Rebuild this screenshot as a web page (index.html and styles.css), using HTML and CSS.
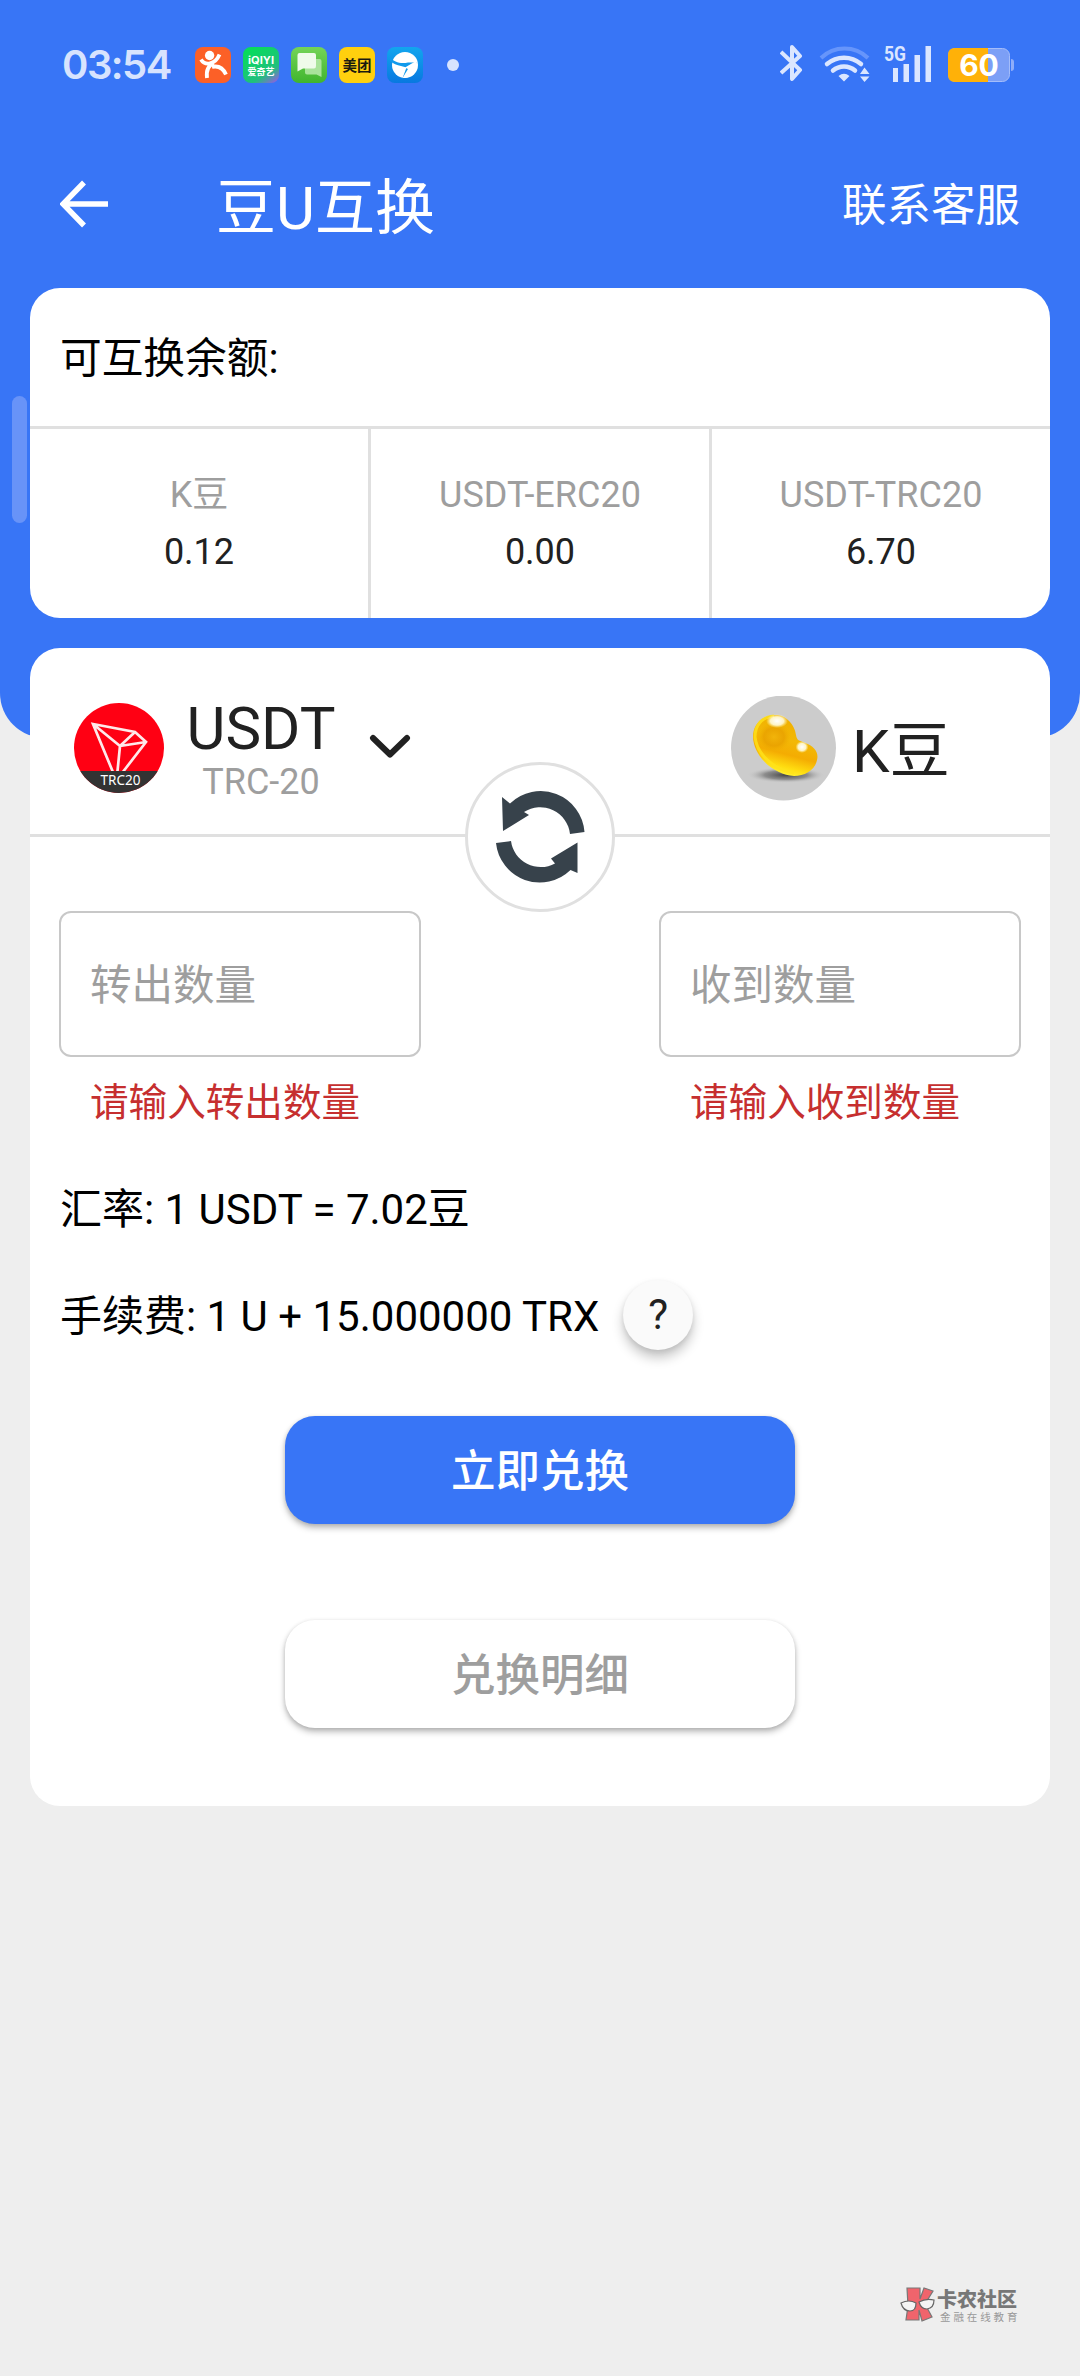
FILE: index.html
```html
<!DOCTYPE html>
<html lang="zh-CN">
<head>
<meta charset="utf-8">
<title>豆U互换</title>
<link rel="stylesheet" href="styles.css">
</head>
<body>
<div class="screen">
  <div class="edge-handle"></div>
  <div class="hero">
    <header class="status">
      <div class="status-left">
        <span class="clock">03:54</span>
        <div class="apps">
          <svg class="app" viewBox="0 0 36 36"><rect width="36" height="36" rx="8" fill="#fc6027"/><circle cx="14.600" cy="8.500" r="4.700" fill="#fff"/><path d="M6 12.500C10 19 20 18 24.500 7.500M12 31C11 23 14 18 19 16.500M17 20C23 18.500 28 21 31 27.500" fill="none" stroke="#fff" stroke-width="3.800"/></svg>
          <svg class="app" viewBox="0 0 36 36"><defs><linearGradient id="iq" x1="0.300" y1="0" x2="1" y2="1"><stop offset="0" stop-color="#08dc5c"/><stop offset=".65" stop-color="#20c07c"/><stop offset="1" stop-color="#a050f0"/></linearGradient></defs><rect width="36" height="36" rx="8" fill="url(#iq)"/><text class="iq-latin" x="18" y="17" textLength="26" lengthAdjust="spacingAndGlyphs">iQIYI</text><text class="iq-cn" x="18" y="27.500">爱奇艺</text></svg>
          <svg class="app" viewBox="0 0 36 36"><defs><linearGradient id="ms" x1="0" y1="0" x2="0" y2="1"><stop offset="0" stop-color="#74d457"/><stop offset="1" stop-color="#40b52e"/></linearGradient></defs><rect width="36" height="36" rx="8" fill="url(#ms)"/><path d="M14 12H28.500Q30.500 12 30.500 14V30L25.500 27.500H16Q14 27.500 14 25.500Z" fill="#a9e39a"/><path d="M8.500 6H23Q25 6 25 8V19Q25 21.500 23 21.500H12L6.500 24.500V8Q6.500 6 8.500 6Z" fill="#effbea"/></svg>
          <svg class="app" viewBox="0 0 36 36"><rect width="36" height="36" rx="8" fill="#ffd00e"/><text class="mt" x="18" y="23.500">美团</text></svg>
          <svg class="app" viewBox="0 0 36 36"><defs><linearGradient id="bl" x1="0" y1="0" x2="0" y2="1"><stop offset="0" stop-color="#12a6ee"/><stop offset="1" stop-color="#0878e0"/></linearGradient></defs><rect width="36" height="36" rx="8" fill="url(#bl)"/><circle cx="18" cy="18" r="13" fill="#fff"/><path d="M3 10C7 15.500 14 17 21 15.500H29.500C28 19 26 22 21 25L15 32.500L19.500 20.500L14 19C10 18.500 6 16.500 3 14Z" fill="#109aec"/><path d="M18 20.500L29 14C31 20 27 28 20 30.500L15.500 31L21 22Z" fill="#fff"/></svg>
        </div>
        <span class="more"></span>
      </div>
      <svg class="status-right" viewBox="0 0 240 40">
        <g fill="none" stroke="#dbe6ff" stroke-width="4" stroke-linejoin="round"><path d="M1 9L20 27L12 36V4L20 13L1 30"/></g>
        <path d="M41 15A34 34 0 0 1 88 15" fill="none" stroke="#6695fb" stroke-width="4"/>
        <path d="M47 21A26 26 0 0 1 81 21M53 27.500A17 17 0 0 1 75 27.500" fill="none" stroke="#dbe6ff" stroke-width="4.500" stroke-linecap="round"/>
        <path d="M58.500 33Q64 28.500 69.500 33L64 38.500ZM80 31L84.500 24.500L89.500 31ZM80 33.500H89.500L84.500 39Z" fill="#dbe6ff"/>
        <text class="net" x="104" y="18" textLength="22" lengthAdjust="spacingAndGlyphs">5G</text>
        <path d="M113 25h5v14h-5zM123.500 21h5.500v18h-5.500zM134.500 12h5.500v27h-5.500zM145.500 3h5.500v36h-5.500z" fill="#dbe6ff"/>
        <rect x="168.500" y="5.500" width="61" height="33" rx="7" fill="#7c9ff6" stroke="#a4bdfa"/>
        <path d="M231 16v12q3 0 3-3v-6q0-3-3-3z" fill="#8fadf9"/>
        <path d="M208 5V39H175Q168 39 168 32V12Q168 5 175 5Z" fill="#ffb108"/>
        <text class="batt" x="199" y="33">60</text>
      </svg>
    </header>
    <nav class="topbar">
      <svg class="back" viewBox="0 0 48 48"><path d="M48 24H5M24 2.500L3 24L24 45.500" fill="none" stroke="#fff" stroke-width="5.500"/></svg>
      <h1 class="title">豆U互换</h1>
      <a class="service">联系客服</a>
    </nav>
  </div>

  <main class="content">
    <section class="card balances">
      <h2 class="balances-title">可互换余额:</h2>
      <div class="balance-row">
        <div class="balance"><span class="label">K豆</span><span class="value">0.12</span></div>
        <div class="balance"><span class="label">USDT-ERC20</span><span class="value">0.00</span></div>
        <div class="balance"><span class="label">USDT-TRC20</span><span class="value">6.70</span></div>
      </div>
    </section>

    <section class="card exchange">
      <div class="pair">
        <div class="from">
          <svg class="tron" viewBox="0 0 90 90"><defs><clipPath id="disc"><circle cx="45" cy="45" r="45"/></clipPath></defs><g clip-path="url(#disc)"><rect width="90" height="90" fill="#ff0013"/><path d="M19 21L61 29L72 39L45 74L41 74ZM19 21L46 43L61 29M46 43L72 39M46 43L43 73" fill="none" stroke="#ffe9ea" stroke-width="2.700"/><rect y="68" width="90" height="22" fill="#333"/><text class="tron-text" x="46.500" y="82" textLength="40" lengthAdjust="spacingAndGlyphs">TRC20</text></g></svg>
          <div class="coin"><span class="coin-name">USDT</span><span class="coin-net">TRC-20</span></div>
          <svg class="chevron" viewBox="0 0 42 26"><path d="M4 4L21 20.500L38 4" fill="none" stroke="#212121" stroke-width="6" stroke-linecap="round" stroke-linejoin="round"/></svg>
        </div>
        <div class="to">
          <svg class="bean" viewBox="0 0 105 105"><defs>
            <linearGradient id="gold" x1=".65" y1=".1" x2=".4" y2="1"><stop offset="0" stop-color="#f0b000"/><stop offset=".35" stop-color="#f3b806"/><stop offset=".6" stop-color="#f4ac02"/><stop offset=".82" stop-color="#ffdc10"/><stop offset="1" stop-color="#fff838"/></linearGradient>
            <radialGradient id="shade"><stop offset="0" stop-color="#444"/><stop offset=".55" stop-color="#777" stop-opacity=".75"/><stop offset="1" stop-color="#ccc" stop-opacity="0"/></radialGradient>
            <radialGradient id="core"><stop offset="0" stop-color="#f2b40a"/><stop offset=".6" stop-color="#e8a000" stop-opacity=".8"/><stop offset="1" stop-color="#efb000" stop-opacity="0"/></radialGradient>
            <radialGradient id="shine"><stop offset="0" stop-color="#fff"/><stop offset=".6" stop-color="#fffbdc" stop-opacity=".9"/><stop offset="1" stop-color="#fff3a0" stop-opacity="0"/></radialGradient></defs>
            <circle cx="52.500" cy="52" r="52.500" fill="#ccc"/><ellipse cx="55" cy="79" rx="39" ry="8" fill="url(#shade)"/>
            <path d="M45 19C55 19 64 29 65 39C66 45 68 44 74 47C83 50 88 56 86 64C84 74 74 80 63 80C44 79 23 62 22 41C22 28 31 19 45 19Z" fill="url(#gold)"/>
            <path d="M43 20C31 21 24 29 24 41C26 59 44 74 63 77" fill="none" stroke="#ffe21a" stroke-width="3" opacity=".8"/>
            <ellipse cx="43" cy="41" rx="17" ry="15" fill="url(#core)"/>
            <ellipse cx="46" cy="25" rx="11" ry="7" fill="url(#shine)"/><ellipse cx="71" cy="51" rx="6.500" ry="6" fill="url(#shine)"/></svg>
          <span class="coin-name">K豆</span>
        </div>
        <button class="swap" aria-label="swap"><svg viewBox="0 0 150 150"><path d="M37 35L45 41.500A44 44 0 0 1 119.500 70L105 72A30 30 0 0 0 59 50L64 53L38 69ZM31 81L46 79A30 30 0 0 0 90 101.500L86 96.500L112.500 80.500V111L105.500 108A44 44 0 0 1 31 81Z" fill="#37424b"/></svg></button>
      </div>
      <div class="fields">
        <label class="field"><span class="box">转出数量</span><span class="error">请输入转出数量</span></label>
        <label class="field"><span class="box">收到数量</span><span class="error">请输入收到数量</span></label>
      </div>
      <p class="info rate">汇率: 1 USDT = 7.02豆</p>
      <div class="info fee"><span class="fee-text">手续费: 1 U + 15.000000 TRX</span><button class="help">?</button></div>
      <div class="actions">
        <button class="action primary">立即兑换</button>
        <button class="action plain">兑换明细</button>
      </div>
    </section>
  </main>

  <footer class="brand">
    <svg class="brand-logo" viewBox="0 0 35 36"><path d="M7 2H20V13L24 2L33 5L25 18L32 31L22 35L19 24V34H6L8 20Z" fill="#f0646c" stroke="#777" stroke-width="1.200"/><path d="M1 17Q9 13 16 17Q16 25 10 25Q3 25 1 17ZM19 16Q26 12 34 14Q34 22 27 23Q21 23 19 16Z" fill="#f4f4f4" stroke="#666" stroke-width="1.200"/></svg>
    <div class="brand-text"><span class="brand-name">卡农社区</span><span class="brand-sub">金融在线教育</span></div>
  </footer>
</div>
</body>
</html>
```
FILE: styles.css
```css
* { box-sizing: border-box; }
body { margin: 0; background: #eee; font-family: Roboto, "Noto Sans CJK SC", sans-serif; color: #212121; }
h1, h2, p { margin: 0; font-weight: 400; }
button { padding: 0; border: 0; font-family: inherit; }
svg { display: block; }

.screen { position: relative; width: 1080px; height: 2376px; overflow: hidden; background: #eee; display: flex; flex-direction: column; }
.hero { height: 738px; flex: none; background: #3875f6; border-radius: 0 0 45px 45px; }
.edge-handle { position: absolute; left: 12px; top: 396px; width: 15px; height: 127px; border-radius: 8px; background: #6893f8; }

.status { height: 130px; padding: 41px 60px 0 62px; display: flex; justify-content: space-between; align-items: flex-start; }
.status-left { display: flex; align-items: center; height: 48px; }
.clock { width: 133px; font: 600 40px/46px Inter, sans-serif; letter-spacing: -1.500px; color: #d7e3fe; }
.apps { display: flex; gap: 12px; }
.app { width: 36px; height: 36px; }
.more { width: 12px; height: 12px; margin-left: 24px; border-radius: 50%; background: #d7e3fe; }
.iq-latin { font: 700 10px Inter, sans-serif; fill: #fff; text-anchor: middle; }
.iq-cn { font: 700 9px "Noto Sans CJK SC", sans-serif; fill: #fff; text-anchor: middle; }
.mt { font: 700 14.500px "Noto Sans CJK SC", sans-serif; fill: #1b1a10; text-anchor: middle; }
.status-right { width: 240px; height: 40px; margin-top: 2px; }
.net { font: 700 21px Roboto, sans-serif; fill: #dbe6ff; }
.batt { font: 700 30px Inter, sans-serif; fill: #fff; text-anchor: middle; }

.topbar { height: 148px; padding: 0 60px; display: flex; align-items: center; color: #fff; }
.back { width: 48px; height: 48px; }
.title { margin-left: 108px; padding-top: 9px; font-size: 60px; line-height: 72px; }
.service { margin-left: auto; padding-top: 4px; font-size: 44.500px; line-height: 54px; }

.content { margin-top: -450px; padding: 0 30px; display: flex; flex-direction: column; gap: 30px; }
.card { background: #fff; border-radius: 30px; }
.balances { height: 330px; overflow: hidden; display: flex; flex-direction: column; }
.balances-title { height: 141px; padding-left: 30px; border-bottom: 3px solid #e0e0e0; font-size: 41.700px; line-height: 142px; color: #000; }
.balance-row { flex: 1; display: grid; grid-template-columns: 338px 341px 341px; }
.balance { display: flex; flex-direction: column; align-items: center; padding-top: 38px; font-size: 36px; }
.balance + .balance { border-left: 3px solid #e0e0e0; }
.label, .value { line-height: 57px; }
.label { color: #9e9e9e; }

.exchange { height: 1158px; }
.pair { position: relative; height: 189px; border-bottom: 3px solid #e0e0e0; display: flex; justify-content: space-between; }
.from, .to { display: flex; align-items: center; }
.from { padding-left: 44px; }
.tron { width: 90px; height: 90px; margin-top: 14px; }
.tron-text { font: 14px "Noto Sans", sans-serif; fill: #fff; text-anchor: middle; }
.coin { width: 152px; margin-left: 21px; padding-top: 22px; display: flex; flex-direction: column; align-items: center; }
.coin-name { font-size: 60px; line-height: 60px; }
.coin-net { font-size: 36px; line-height: 46px; color: #9e9e9e; }
.chevron { width: 42px; height: 26px; margin: 12px 0 0 32px; }
.to { width: 319px; gap: 16px; }
.bean { width: 105px; height: 105px; margin-top: 14px; }
.to .coin-name { margin-top: 21px; }
.swap { position: absolute; left: 435px; top: 114px; width: 150px; height: 150px; border: 3px solid #e0e0e0; border-radius: 50%; background: #fff; }
.swap svg { width: 150px; height: 150px; margin: -3px; }

.fields { padding: 74px 29px 0; display: flex; justify-content: space-between; }
.field { width: 362px; display: flex; flex-direction: column; }
.box { height: 146px; padding-left: 29px; border: 2px solid #c8c8c8; border-radius: 12px; font-size: 41.500px; line-height: 145px; color: #9e9e9e; }
.error { margin-top: 22px; padding-left: 31px; font-size: 38.600px; line-height: 48px; color: #c62f2f; }
.info { padding-left: 30px; font-size: 42px; line-height: 60px; color: #000; }
.rate { margin-top: 53px; }
.fee { margin-top: 39px; height: 72px; display: flex; align-items: center; gap: 24px; }
.fee-text { padding-top: 3px; }
.help { width: 70px; height: 70px; border-radius: 50%; background: #fafafa; box-shadow: 0 8px 12px rgba(0, 0, 0, .22), 0 2px 5px rgba(0, 0, 0, .08); font-size: 42px; line-height: 70px; color: #212121; }
.actions { margin-top: 65px; display: flex; flex-direction: column; align-items: center; gap: 96px; }
.action { width: 510px; height: 108px; padding-bottom: 6px; border-radius: 30px; font-size: 44.500px; font-weight: 500; box-shadow: 0 4px 6px rgba(0, 0, 0, .25), 0 1px 4px rgba(0, 0, 0, .12); }
.primary { background: #3875f6; color: #fff; }
.plain { background: #fff; color: #9e9e9e; }

.brand { margin: 480px 0 0 900px; display: flex; gap: 2px; align-items: flex-start; }
.brand-logo { width: 35px; height: 36px; }
.brand-text { display: flex; flex-direction: column; padding-top: 2px; }
.brand-name { font-size: 20px; font-weight: 900; line-height: 24px; color: #777; }
.brand-sub { padding-left: 3px; font-size: 10.500px; line-height: 12px; letter-spacing: 2.900px; color: #999; }
```
